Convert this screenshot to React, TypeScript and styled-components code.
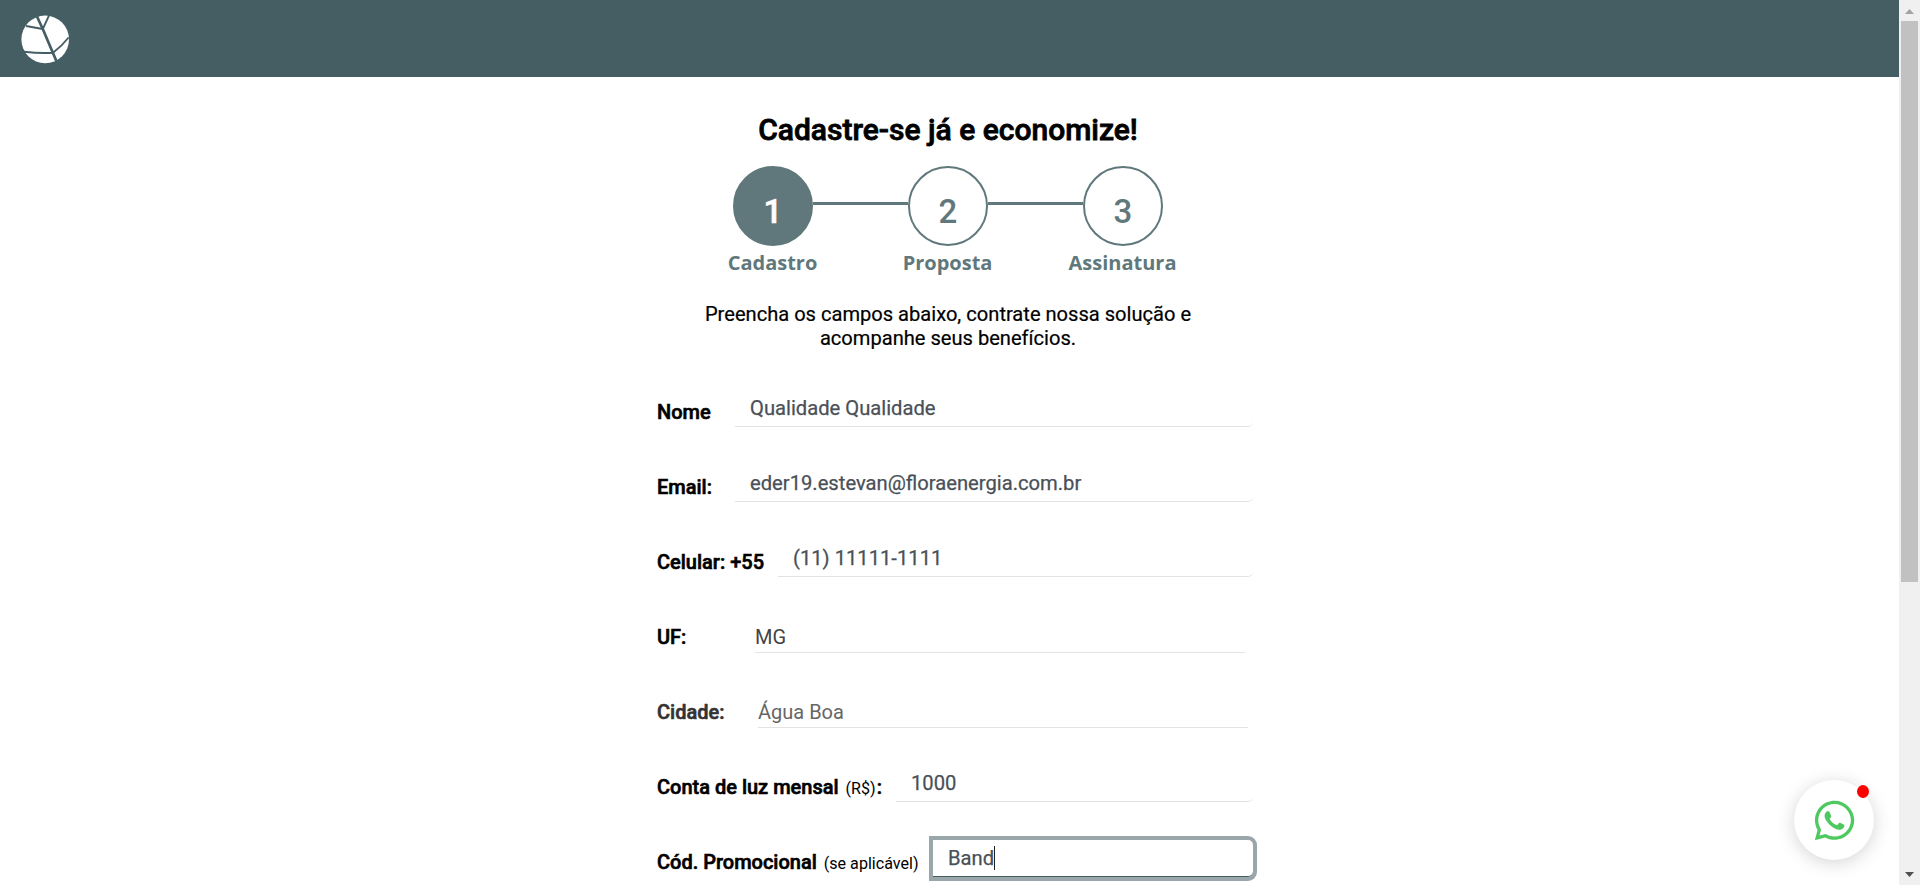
import React from "react";
import styled, { createGlobalStyle } from "styled-components";
import { FaWhatsapp } from "react-icons/fa";

const GlobalStyle = createGlobalStyle`
  * { box-sizing: border-box; }
  html, body { margin: 0; padding: 0; overflow: hidden; background: #fff; }
  body { font-family: Roboto, "Liberation Sans", sans-serif; color: #000; }
  h1, p { margin: 0; }
`;

const Shell = styled.div`
  display: flex;
  width: 100vw;
  height: 885px;
  overflow: hidden;
`;

const Page = styled.div`
  position: relative;
  flex: 1;
  min-width: 0;
  overflow: hidden;
`;

const Header = styled.header`
  display: flex;
  align-items: center;
  height: 77px;
  padding: 0 0 0 20px;
  background: #455e63;
`;

const Content = styled.main`
  display: flex;
  flex-direction: column;
  align-items: center;
  width: 596px;
  margin-left: 650px;
`;

const Title = styled.h1`
  margin-top: 35px;
  font-size: 30px;
  font-weight: 500;
  line-height: 36px;
  white-space: nowrap;
  -webkit-text-stroke: 0.8px #000;
`;

const Steps = styled.div`
  display: flex;
  align-items: flex-start;
  margin-top: 18px;
`;

const Step = styled.div`
  display: flex;
  flex-direction: column;
  align-items: center;
  width: 80px;
`;

const StepCircle = styled.div<{ $active?: boolean }>`
  display: flex;
  align-items: center;
  justify-content: center;
  width: 80px;
  height: 80px;
  padding-top: 12px;
  border: 2px solid #60787b;
  border-radius: 50%;
  background: ${(p) => (p.$active ? "#60787b" : "#fff")};
  color: ${(p) => (p.$active ? "#fff" : "#60787b")};
  font-size: 33px;
  font-weight: 500;
  line-height: 40px;
  -webkit-text-stroke: ${(p) => (p.$active ? "0.6px #fff" : "0")};
`;

const StepLabel = styled.div`
  margin: 3px 1px 0 0;
  color: #60787b;
  font-family: "Open Sans", "Noto Sans", sans-serif;
  font-size: 20px;
  font-weight: 700;
  line-height: 27px;
  white-space: nowrap;
`;

const Connector = styled.div`
  width: 95px;
  height: 3px;
  margin-top: 36px;
  background: #60787b;
`;

const Intro = styled.p`
  margin-top: 26px;
  font-size: 20.1px;
  line-height: 24px;
  text-align: center;
  white-space: nowrap;
  -webkit-text-stroke: 0.2px #000;
`;

const Form = styled.form`
  align-self: flex-start;
  width: 603px;
  margin-top: 25px;
  padding-left: 7px;
`;

const Row = styled.div`
  display: flex;
  align-items: flex-start;
  height: 75px;
`;

const Label = styled.label<{ $width: number; $muted?: boolean }>`
  flex: none;
  width: ${(p) => p.$width}px;
  padding-top: 25px;
  color: ${(p) => (p.$muted ? "#333" : "#000")};
  font-size: 20px;
  font-weight: 500;
  line-height: 24px;
  white-space: nowrap;
  -webkit-text-stroke: 0.6px currentColor;
`;

const Hint = styled.span`
  margin: 0 1px 0 2px;
  font-size: 16.1px;
  font-weight: 400;
  -webkit-text-stroke: 0;
`;

const Input = styled.div`
  display: flex;
  align-items: center;
  flex: 1;
  height: 37px;
  margin-top: 15px;
  padding: 0 0 1px 15px;
  border-bottom: 1px solid #e2e4e4;
  border-radius: 0 5px 5px 0;
  color: #495057;
  font-size: 20.2px;
  line-height: 24px;
  -webkit-text-stroke: 0.25px currentColor;
`;

const FocusedInput = styled(Input)`
  border-bottom-color: #455e63;
  box-shadow: 0 0 0 4px #9aa7aa;
`;

const Caret = styled.span`
  width: 1px;
  height: 24px;
  background: #222;
`;

const Select = styled.div<{ $muted?: boolean }>`
  flex: none;
  width: 490px;
  height: 34px;
  margin-top: 19px;
  padding-top: 6px;
  border-bottom: 1px solid #e2e4e4;
  color: ${(p) => (p.$muted ? "#666" : "#444")};
  font-size: 20px;
  line-height: 24px;
`;

const Chat = styled.div`
  position: absolute;
  right: 25px;
  bottom: 25px;
  display: flex;
  align-items: center;
  justify-content: center;
  width: 80px;
  height: 80px;
  border-radius: 50%;
  background: #fff;
  color: #4dc960;
  box-shadow: 0 3px 18px rgba(0, 0, 0, 0.17);
`;

const ChatDot = styled.span`
  position: absolute;
  top: 5px;
  right: 5px;
  width: 12px;
  height: 13px;
  border-radius: 50%;
  background: #f00;
`;

const Scrollbar = styled.div`
  display: flex;
  flex-direction: column;
  align-items: center;
  justify-content: space-between;
  width: 21px;
  padding: 9px 0 8px;
  background: #f0f0f0;
`;

const Thumb = styled.div`
  width: 17px;
  height: 561px;
  margin: 7px 0 auto;
  background: #c1c1c1;
`;

const Arrow = styled.svg`
  display: block;
  width: 9px;
  height: 5px;
`;

const Logo = () => (
  <svg width="50" height="50" viewBox="0 0 50 50" fill="none">
    <circle cx="25.2" cy="25.4" r="23.8" fill="#fff" />
    <g stroke="#455e63">
      <path d="M17 2.5 L23 15.5 L36.8 48" strokeWidth="2.7" />
      <path d="M29 1.5 L22.8 15" strokeWidth="1.8" />
      <path d="M6 12 L22.8 15" strokeWidth="2" />
      <path d="M4 37.7 Q20 39.5 33 38.7 Q42 32 48.6 23.5" strokeWidth="1.9" />
    </g>
  </svg>
);

export default function App() {
  return (
    <>
      <GlobalStyle />
      <Shell>
        <Page>
          <Header>
            <Logo />
          </Header>
          <Content>
            <Title>Cadastre-se já e economize!</Title>
            <Steps>
              <Step>
                <StepCircle $active>1</StepCircle>
                <StepLabel>Cadastro</StepLabel>
              </Step>
              <Connector />
              <Step>
                <StepCircle>2</StepCircle>
                <StepLabel>Proposta</StepLabel>
              </Step>
              <Connector />
              <Step>
                <StepCircle>3</StepCircle>
                <StepLabel>Assinatura</StepLabel>
              </Step>
            </Steps>
            <Intro>
              Preencha os campos abaixo, contrate nossa solução e
              <br />
              acompanhe seus benefícios.
            </Intro>
            <Form>
              <Row>
                <Label $width={78}>Nome</Label>
                <Input>Qualidade Qualidade</Input>
              </Row>
              <Row>
                <Label $width={78}>Email:</Label>
                <Input>eder19.estevan@floraenergia.com.br</Input>
              </Row>
              <Row>
                <Label $width={121}>Celular: +55</Label>
                <Input>(11) 11111-1111</Input>
              </Row>
              <Row>
                <Label $width={98}>UF:</Label>
                <Select>MG</Select>
              </Row>
              <Row>
                <Label $width={101} $muted>Cidade:</Label>
                <Select $muted>Água Boa</Select>
              </Row>
              <Row>
                <Label $width={239}>
                  Conta de luz mensal <Hint>(R$)</Hint>:
                </Label>
                <Input>1000</Input>
              </Row>
              <Row>
                <Label $width={276}>
                  Cód. Promocional <Hint>(se aplicável)</Hint>
                </Label>
                <FocusedInput>
                  Band
                  <Caret />
                </FocusedInput>
              </Row>
            </Form>
          </Content>
          <Chat>
            <FaWhatsapp size={45} />
            <ChatDot />
          </Chat>
        </Page>
        <Scrollbar>
          <Arrow viewBox="0 0 9 5">
            <path d="M0 5 L4.5 0 L9 5 Z" fill="#a3a3a3" />
          </Arrow>
          <Thumb />
          <Arrow viewBox="0 0 9 5">
            <path d="M0 0 L4.5 5 L9 0 Z" fill="#505050" />
          </Arrow>
        </Scrollbar>
      </Shell>
    </>
  );
}
